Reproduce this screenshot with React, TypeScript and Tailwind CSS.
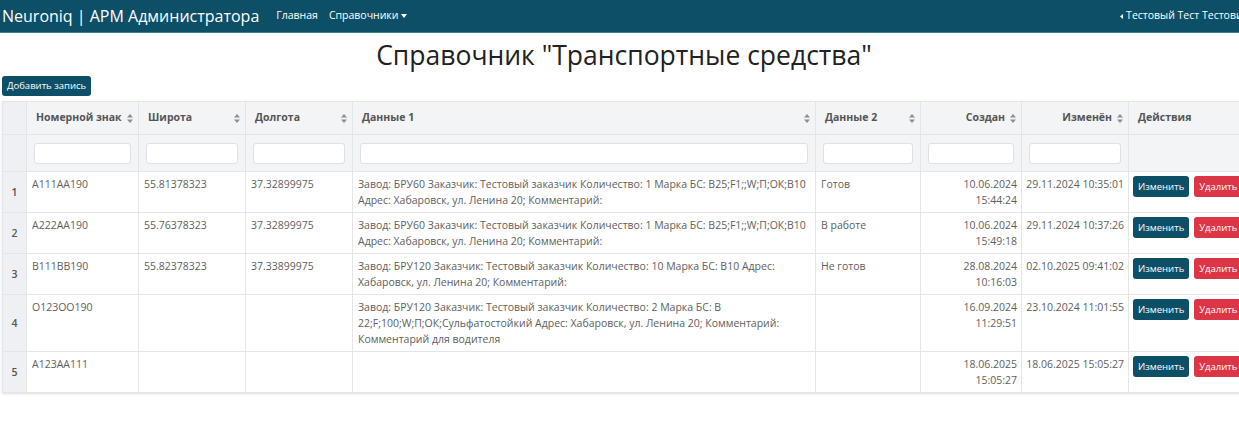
import React from "react";

// mock data
const rows = [
  {
    id: 1,
    plate: "A111AA190",
    lat: "55.81378323",
    lon: "37.32899975",
    data1: "Завод: БРУ60 Заказчик: Тестовый заказчик Количество: 1 Марка БС: B25;F1;;W;П;ОК;B10 Адрес: Хабаровск, ул. Ленина 20; Комментарий:",
    data2: "Готов",
    created: ["10.06.2024", "15:44:24"],
    updated: "29.11.2024 10:35:01",
  },
  {
    id: 2,
    plate: "A222AA190",
    lat: "55.76378323",
    lon: "37.32899975",
    data1: "Завод: БРУ60 Заказчик: Тестовый заказчик Количество: 1 Марка БС: B25;F1;;W;П;ОК;B10 Адрес: Хабаровск, ул. Ленина 20; Комментарий:",
    data2: "В работе",
    created: ["10.06.2024", "15:49:18"],
    updated: "29.11.2024 10:37:26",
  },
  {
    id: 3,
    plate: "B111BB190",
    lat: "55.82378323",
    lon: "37.33899975",
    data1: "Завод: БРУ120 Заказчик: Тестовый заказчик Количество: 10 Марка БС: B10 Адрес: Хабаровск, ул. Ленина 20; Комментарий:",
    data2: "Не готов",
    created: ["28.08.2024", "10:16:03"],
    updated: "02.10.2025 09:41:02",
  },
  {
    id: 4,
    plate: "O123OO190",
    lat: "",
    lon: "",
    data1: "Завод: БРУ120 Заказчик: Тестовый заказчик Количество: 2 Марка БС: B 22;F;100;W;П;ОК;Сульфатостойкий Адрес: Хабаровск, ул. Ленина 20; Комментарий: Комментарий для водителя",
    data2: "",
    created: ["16.09.2024", "11:29:51"],
    updated: "23.10.2024 11:01:55",
  },
  {
    id: 5,
    plate: "A123AA111",
    lat: "",
    lon: "",
    data1: "",
    data2: "",
    created: ["18.06.2025", "15:05:27"],
    updated: "18.06.2025 15:05:27",
  },
];

const columns = [
  { title: "Номерной знак", right: false, filter: true },
  { title: "Широта", right: false, filter: true },
  { title: "Долгота", right: false, filter: true },
  { title: "Данные 1", right: false, filter: true },
  { title: "Данные 2", right: false, filter: true },
  { title: "Создан", right: true, filter: true },
  { title: "Изменён", right: true, filter: true },
  { title: "Действия", right: false, filter: false },
];

function SortIcon() {
  return (
    <svg width="6" height="9" viewBox="0 0 6 9" className="shrink-0">
      <path d="M3 0 L6 3.6 L0 3.6 Z" fill="#8a8f96" />
      <path d="M3 9 L6 5.4 L0 5.4 Z" fill="#8a8f96" />
    </svg>
  );
}

export default function App() {
  return (
    <div
      className="w-[1239px] h-[433px] overflow-hidden bg-white text-[#606060]"
      style={{ fontFamily: '"Open Sans", "Noto Sans", sans-serif' }}
    >
      {/* Navbar */}
      <div className="w-[1249px] h-[33px] bg-[#0c4f67] border-b border-[#3d7c93] flex items-center whitespace-nowrap text-white">
        <span className="ml-[2px] text-[16px] leading-none">Neuroniq | АРМ Администратора</span>
        <span className="ml-[17px] text-[10.5px]">Главная</span>
        <span className="ml-[11px] text-[10.5px] flex items-center">
          Справочники
          <svg width="6" height="4" viewBox="0 0 6 4" className="ml-[3px]">
            <path d="M0 0 L6 0 L3 4 Z" fill="#fff" />
          </svg>
        </span>
        <span className="ml-auto text-[10.5px] flex items-center">
          <svg width="3" height="5" viewBox="0 0 3 5" className="mr-[3px]">
            <path d="M3 0 L3 5 L0 2.5 Z" fill="#fff" />
          </svg>
          Тестовый Тест Тестович
        </span>
      </div>

      {/* Title */}
      <div className="w-[1248px] text-center pt-[5px]">
        <h1 className="text-[26.5px] leading-[35px] text-[#222]">Справочник "Транспортные средства"</h1>
      </div>

      <div className="flex pl-[2px] mt-[3px]">
        <button className="h-[20px] px-[5px] rounded-[3px] bg-[#0c4f67] text-white text-[9.5px] leading-none">
          Добавить запись
        </button>
      </div>

      {/* Table */}
      <div className="pl-[2px] mt-[5px]">
        <table className="table-fixed border-collapse w-[1260px] border border-[#dfe2e6] shadow-sm text-[10.5px]">
          <colgroup>
            <col className="w-[24px]" />
            <col className="w-[112px]" />
            <col className="w-[107px]" />
            <col className="w-[107px]" />
            <col className="w-[463px]" />
            <col className="w-[105px]" />
            <col className="w-[101px]" />
            <col className="w-[107px]" />
            <col className="w-[134px]" />
          </colgroup>
          <thead>
            <tr className="h-[33px] bg-[#f3f4f6]">
              <th className="border border-[#e3e6e9] bg-[#eef0f3]"></th>
              {columns.map((c) => (
                <th key={c.title} className="border border-[#e3e6e9] pl-[9px] pr-[5px] font-bold text-[#555] whitespace-nowrap">
                  <div className={`flex items-center gap-[5px] ${c.right ? "justify-end" : "justify-between"}`}>
                    <span>{c.title}</span>
                    <SortIcon />
                  </div>
                </th>
              ))}
            </tr>
            <tr className="h-[37px] bg-[#f3f4f6]">
              <th className="border border-[#e3e6e9] bg-[#eef0f3]"></th>
              {columns.map((c) => (
                <th key={c.title} className="border border-[#e3e6e9] px-[7px]">
                  {c.filter && (
                    <input className="block w-full h-[21px] bg-white border border-[#dde0e4] rounded-[3px]" />
                  )}
                </th>
              ))}
            </tr>
          </thead>
          <tbody>
            {rows.map((r) => (
              <tr key={r.id} className="leading-[16px] align-top">
                <td className="border border-[#e3e6e9] bg-[#eef0f3] text-center align-middle font-semibold text-[#555] py-[4px]">
                  {r.id}
                </td>
                <td className="border border-[#e3e6e9] px-[5px] py-[4px]">{r.plate}</td>
                <td className="border border-[#e3e6e9] px-[5px] py-[4px]">{r.lat}</td>
                <td className="border border-[#e3e6e9] px-[5px] py-[4px]">{r.lon}</td>
                <td className="border border-[#e3e6e9] px-[5px] py-[4px]">{r.data1}</td>
                <td className="border border-[#e3e6e9] px-[5px] py-[4px]">{r.data2}</td>
                <td className="border border-[#e3e6e9] px-[4px] py-[4px] text-right">
                  {r.created[0]}
                  <br />
                  {r.created[1]}
                </td>
                <td className="border border-[#e3e6e9] px-[4px] py-[4px] text-right whitespace-nowrap">{r.updated}</td>
                <td className="border border-[#e3e6e9] px-[4px] py-[4px] whitespace-nowrap">
                  <div className="flex gap-[5px]">
                    <button className="h-[21px] px-[5px] rounded-[3px] bg-[#0c4f67] text-white text-[9.5px] leading-none">
                      Изменить
                    </button>
                    <button className="h-[21px] px-[5px] rounded-[3px] bg-[#dc3545] text-white text-[9.5px] leading-none">
                      Удалить
                    </button>
                  </div>
                </td>
              </tr>
            ))}
          </tbody>
        </table>
      </div>
    </div>
  );
}
